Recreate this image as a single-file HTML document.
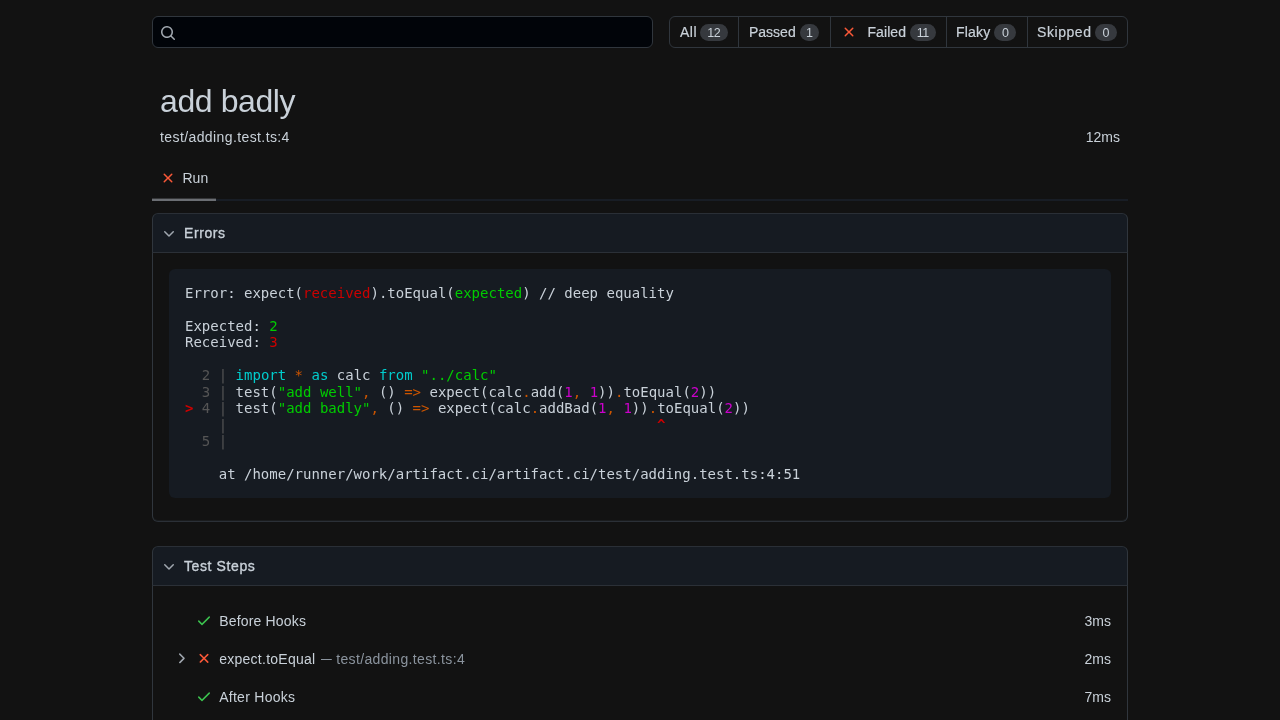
<!DOCTYPE html>
<html lang="en">
<head>
<meta charset="utf-8">
<title>Playwright Test Report</title>
<style>
:root{
  --bg:#121212;
  --fg:#c9d1d9;
  --muted:#8b949e;
  --border:#30363d;
  --border-muted:#21262d;
  --subtle:#161b22;
  --inset:#010409;
  --neutral-muted:rgba(110,118,129,.4);
  --red:#fa5838;
  --green:#3cc24f;
}
*{box-sizing:border-box;min-width:0;min-height:0}
html,body{margin:0;padding:0;width:100%;height:100%;overflow:hidden}
body{
  background:var(--bg);color:var(--fg);
  font-family:"Liberation Sans",Helvetica,Arial,sans-serif;
  font-size:14px;line-height:1.5;
  -webkit-font-smoothing:antialiased;
}
svg{fill:currentColor;flex:none}
.report{width:1024px;margin:0 auto;padding:0 24px;position:relative;will-change:transform}
/* header */
.header{display:flex;flex-direction:row;padding:16px 0 0 0;height:48px}
.search{position:relative;flex:none;width:501px;height:32px;border:1px solid var(--border);border-radius:6px;background:var(--inset)}
.search svg{position:absolute;left:7px;top:8px;color:var(--fg);opacity:.8}
.subnav{display:flex;margin-left:16px;flex:none;height:32px}
.subnav-item{display:flex;flex:none;align-items:center;padding:0 0 0 10px;height:32px;line-height:20px;font-weight:400;color:var(--fg);border:1px solid var(--border);margin-right:-1px;white-space:nowrap}
.subnav-item:first-child{border-top-left-radius:6px;border-bottom-left-radius:6px}
.subnav-item:last-child{border-top-right-radius:6px;border-bottom-right-radius:6px;margin-right:0}
.lb{-webkit-text-stroke:.2px currentColor}
.counter{display:inline-block;flex:none;padding:0;margin-left:4px;font-size:12.5px;font-weight:400;line-height:18px;height:16.2px;letter-spacing:-.5px;text-indent:-.5px;text-align:center;background:var(--neutral-muted);border-radius:2em;color:var(--fg);position:relative;top:.5px}
/* title */
.title{font-size:32px;line-height:40px;font-weight:400;padding:8px;margin-top:25px;color:var(--fg);letter-spacing:-0.4px}
.location{display:flex;letter-spacing:.4px;padding:0 8px;line-height:21px;height:26.5px;margin-top:-2.5px}
.location .dur{margin-left:auto;letter-spacing:0}
/* tabs */
.tabs{display:flex;height:48px;box-shadow:inset 0 -2px 0 #181d25}
.tab{display:flex;align-items:center;height:100%;padding:4px 8px 0;border-bottom:2px solid #6b6e73;line-height:32px;position:relative}
.tab::after{content:"";position:absolute;left:0;right:0;bottom:0;height:1px;background:rgba(107,110,115,.4)}
.tab svg{margin-right:6.5px}
/* chips */
.chip-header{display:flex;align-items:center;height:39px;margin-top:12px;padding:0 8px;border:1px solid var(--border);border-top-color:#2a2f36;border-bottom:none;border-radius:6px 6px 0 0;background:var(--subtle);font-weight:400;-webkit-text-stroke:.35px currentColor;letter-spacing:.6px;white-space:nowrap}
.chip-header svg{margin-right:7px;color:#a0a7af}
.chip-body{border:1px solid var(--border);border-top-color:#2b3037;border-radius:0 0 6px 6px;padding:16px;margin-bottom:12px}
.code{background:var(--subtle);border-radius:6px;padding:16px;margin:0 0 7px 0;white-space:pre;font-family:"DejaVu Sans Mono","Liberation Mono",monospace;font-size:14px;line-height:16.45px;color:var(--fg);overflow:hidden}
.code b{font-weight:bold}
.r{color:#c00}.g{color:#0c0}.y{color:#c50}.m{color:#c0c}.c{color:#0cc}.k{color:#555}
/* steps */
.steps{padding:16px 16px 0}
.step{display:flex;align-items:center;height:38px;line-height:38px;white-space:nowrap}
.step .chev{color:#a0a7af;width:16px;margin-left:4px;margin-right:7px;display:flex;position:relative;top:-1px}
.step .st{margin-right:7.2px;position:relative;top:-1px}
.step svg path{transform:translateY(.35px)}
.step .loc{color:var(--muted);display:flex}
.step .dash{display:inline-block;transform:translateY(-.6px) scaleX(.77);transform-origin:0 50%;margin-left:5.2px;width:15.5px}
.step .lt{letter-spacing:.36px}
#s1{letter-spacing:.17px}#s2{letter-spacing:.26px}#s3{letter-spacing:.27px}
.step .dur{margin-left:auto}
.red{color:var(--red)}.green{color:var(--green)}
</style>
</head>
<body>
<div class="report">
  <div class="header">
    <div class="search">
      <svg width="16" height="16" viewBox="0 0 16 16"><path fill-rule="evenodd" d="M11.5 7a4.499 4.499 0 11-8.998 0A4.499 4.499 0 0111.5 7zm-.82 4.74a6 6 0 111.06-1.06l3.04 3.04a.75.75 0 11-1.06 1.06l-3.04-3.04z"/></svg>
    </div>
    <div class="subnav">
      <div class="subnav-item" style="width:70px"><span class="lb" id="l1" style="letter-spacing:.5px">All</span><span class="counter" id="c1" style="width:27.4px;margin-left:3.2px">12</span></div>
      <div class="subnav-item" style="width:93px"><span class="lb" id="l2">Passed</span><span class="counter" id="c2" style="width:19.6px">1</span></div>
      <div class="subnav-item" style="width:117px"><svg class="red" width="16" height="16" viewBox="0 0 16 16" style="margin-left:-.2px;margin-right:10.6px"><path fill-rule="evenodd" d="M3.72 3.72a.75.75 0 011.06 0L8 6.94l3.22-3.22a.75.75 0 111.06 1.06L9.06 8l3.22 3.22a.75.75 0 11-1.06 1.06L8 9.06l-3.22 3.22a.75.75 0 01-1.06-1.06L6.94 8 3.72 4.78a.75.75 0 010-1.06z"/></svg><span class="lb" id="l3" style="letter-spacing:.1px">Failed</span><span class="counter" id="c3" style="width:25.6px;margin-left:4px">11</span></div>
      <div class="subnav-item" style="width:82px;padding-left:9px"><span class="lb" id="l4" style="letter-spacing:.2px">Flaky</span><span class="counter" id="c4" style="width:21.8px">0</span></div>
      <div class="subnav-item" style="width:101px;padding-left:9.1px"><span class="lb" id="l5" style="letter-spacing:.55px">Skipped</span><span class="counter" id="c5" style="width:21.8px;margin-left:3.5px">0</span></div>
    </div>
  </div>

  <div class="title">add badly</div>
  <div class="location"><span>test/adding.test.ts:4</span><span class="dur">12ms</span></div>

  <div class="tabs">
    <div class="tab"><svg class="red" width="16" height="16" viewBox="0 0 16 16"><path fill-rule="evenodd" d="M3.72 3.72a.75.75 0 011.06 0L8 6.94l3.22-3.22a.75.75 0 111.06 1.06L9.06 8l3.22 3.22a.75.75 0 11-1.06 1.06L8 9.06l-3.22 3.22a.75.75 0 01-1.06-1.06L6.94 8 3.72 4.78a.75.75 0 010-1.06z"/></svg>Run</div>
  </div>

  <div class="chip-header"><svg width="16" height="16" viewBox="0 0 16 16"><path fill-rule="evenodd" d="M12.78 6.22a.75.75 0 010 1.06l-4.25 4.25a.75.75 0 01-1.06 0L3.22 7.28a.75.75 0 011.06-1.06L8 9.94l3.72-3.72a.75.75 0 011.06 0z"/></svg>Errors</div>
  <div class="chip-body" style="border-bottom-color:#2b3037;box-shadow:inset 0 -1px 0 rgba(48,54,61,.3)">
<div class="code">Error: expect(<span class="r">received</span>).toEqual(<span class="g">expected</span>) // deep equality

Expected: <span class="g">2</span>
Received: <span class="r">3</span>

 <span class="k"> 2 |</span> <span class="c">import</span> <span class="y">*</span> <span class="c">as</span> calc <span class="c">from</span> <span class="g">"../calc"</span>
 <span class="k"> 3 |</span> test(<span class="g">"add well"</span><span class="y">,</span> () <span class="y">=&gt;</span> expect(calc<span class="y">.</span>add(<span class="m">1</span><span class="y">,</span> <span class="m">1</span>))<span class="y">.</span>toEqual(<span class="m">2</span>))
<b class="r">&gt;</b><span class="k"> 4 |</span> test(<span class="g">"add badly"</span><span class="y">,</span> () <span class="y">=&gt;</span> expect(calc<span class="y">.</span>addBad(<span class="m">1</span><span class="y">,</span> <span class="m">1</span>))<span class="y">.</span>toEqual(<span class="m">2</span>))
 <span class="k">   |</span>                                                   <b class="r">^</b>
 <span class="k"> 5 |</span>

    at /home/runner/work/artifact.ci/artifact.ci/test/adding.test.ts:4:51</div>
  </div>

  <div class="chip-header" style="margin-top:24px"><svg width="16" height="16" viewBox="0 0 16 16"><path fill-rule="evenodd" d="M12.78 6.22a.75.75 0 010 1.06l-4.25 4.25a.75.75 0 01-1.06 0L3.22 7.28a.75.75 0 011.06-1.06L8 9.94l3.72-3.72a.75.75 0 011.06 0z"/></svg>Test Steps</div>
  <div class="chip-body steps" style="height:200px;border-radius:0">
    <div class="step"><span class="chev"></span><svg class="st green" width="16" height="16" viewBox="0 0 16 16"><path fill-rule="evenodd" d="M13.78 4.22a.75.75 0 010 1.06l-7.25 7.25a.75.75 0 01-1.06 0L2.22 9.28a.75.75 0 011.06-1.06L6 10.94l6.72-6.72a.75.75 0 011.06 0z"/></svg><span id="s1">Before Hooks</span><span class="dur">3ms</span></div>
    <div class="step"><span class="chev"><svg width="16" height="16" viewBox="0 0 16 16"><path fill-rule="evenodd" d="M6.22 3.22a.75.75 0 011.06 0l4.25 4.25a.75.75 0 010 1.06l-4.25 4.25a.75.75 0 01-1.06-1.06L9.94 8 6.22 4.28a.75.75 0 010-1.06z"/></svg></span><svg class="st red" width="16" height="16" viewBox="0 0 16 16"><path fill-rule="evenodd" d="M3.72 3.72a.75.75 0 011.06 0L8 6.94l3.22-3.22a.75.75 0 111.06 1.06L9.06 8l3.22 3.22a.75.75 0 11-1.06 1.06L8 9.06l-3.22 3.22a.75.75 0 01-1.06-1.06L6.94 8 3.72 4.78a.75.75 0 010-1.06z"/></svg><span id="s2">expect.toEqual</span><span class="loc"><span class="dash">—</span><span class="lt">test/adding.test.ts:4</span></span><span class="dur">2ms</span></div>
    <div class="step"><span class="chev"></span><svg class="st green" width="16" height="16" viewBox="0 0 16 16"><path fill-rule="evenodd" d="M13.78 4.22a.75.75 0 010 1.06l-7.25 7.25a.75.75 0 01-1.06 0L2.22 9.28a.75.75 0 011.06-1.06L6 10.94l6.72-6.72a.75.75 0 011.06 0z"/></svg><span id="s3">After Hooks</span><span class="dur">7ms</span></div>
  </div>
</div>
</body>
</html>
